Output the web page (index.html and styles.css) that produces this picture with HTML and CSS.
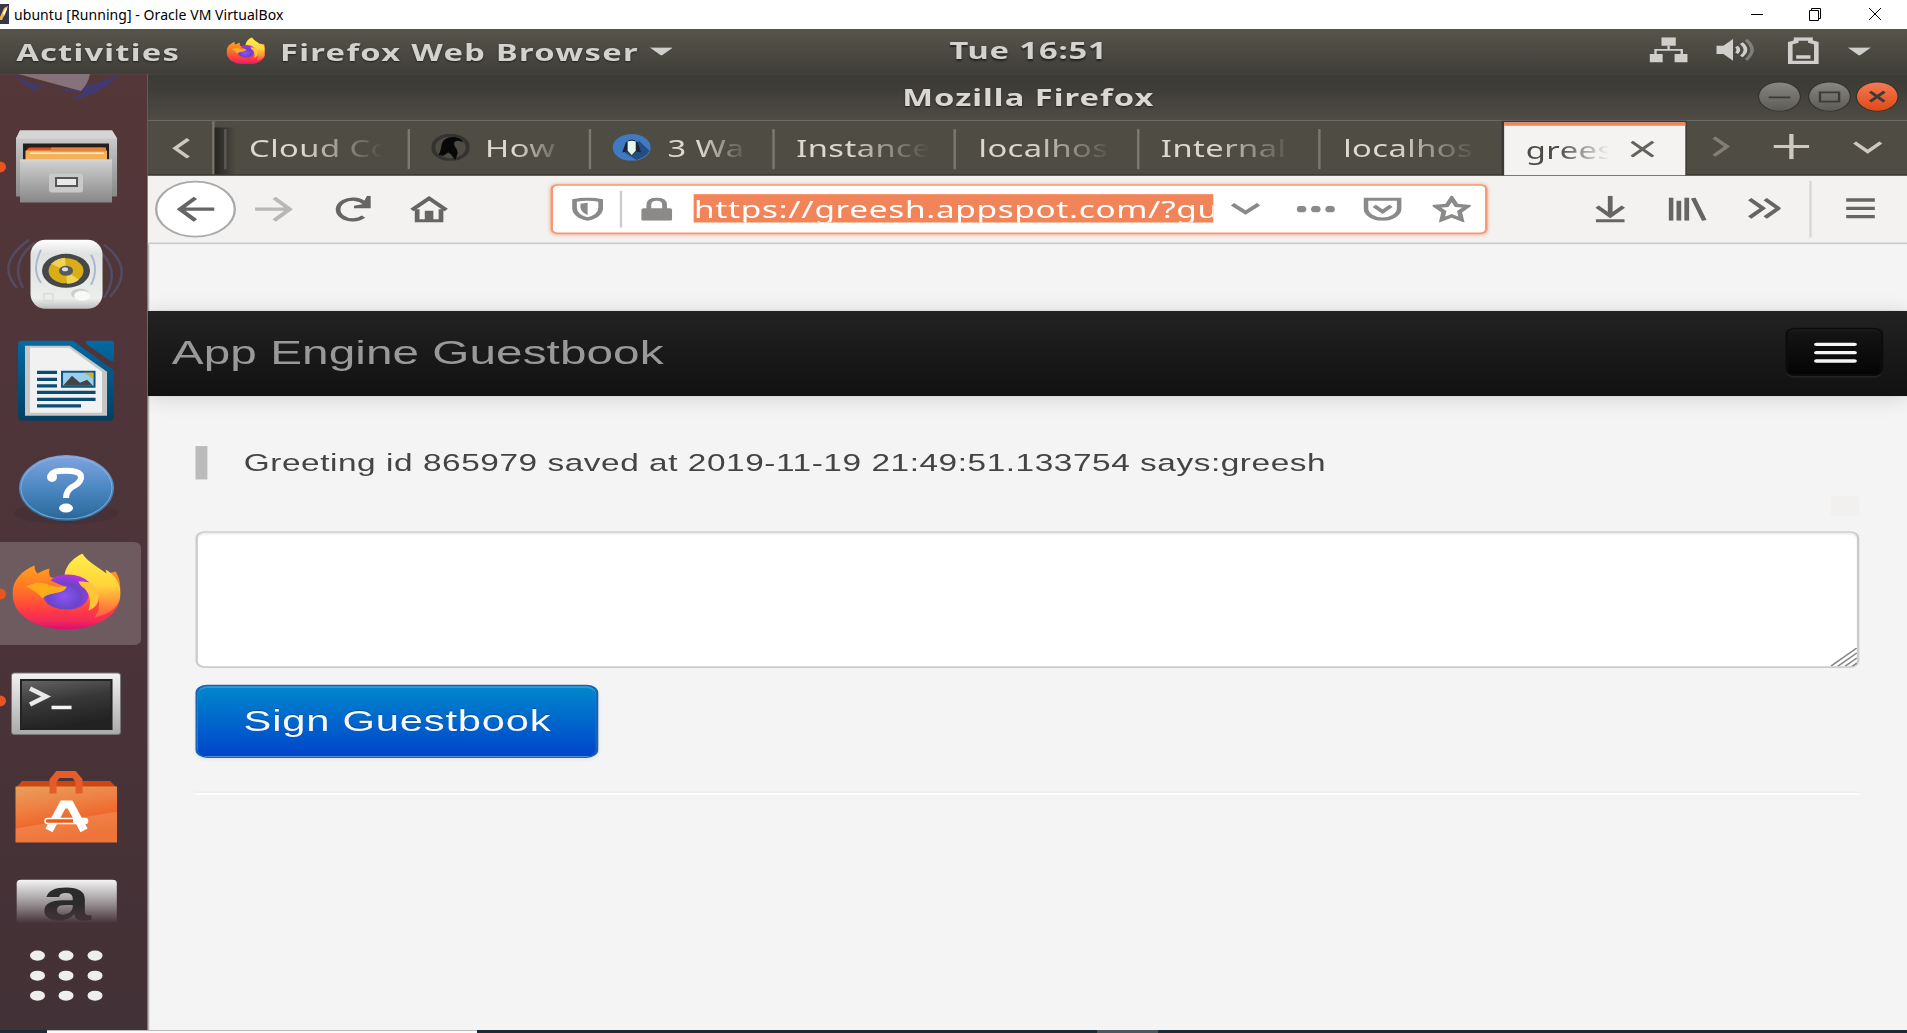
FILE: index.html
```html
<!DOCTYPE html>
<html lang="en">
<head>
<meta charset="utf-8">
<title>ubuntu [Running] - Oracle VM VirtualBox</title>
<link rel="stylesheet" href="styles.css">
</head>
<body>
<svg class="defs" width="0" height="0">
  <defs>
    <linearGradient id="ffBody" x1="0" y1="0" x2="0" y2="1"><stop offset="0" stop-color="#ffa01e"/><stop offset=".4" stop-color="#ff7028"/><stop offset=".72" stop-color="#ff3a45"/><stop offset=".88" stop-color="#f0285a"/><stop offset="1" stop-color="#dc0a72"/></linearGradient>
    <linearGradient id="ffTail" x1="0" y1="0" x2="0" y2="1"><stop offset="0" stop-color="#fff04a"/><stop offset=".5" stop-color="#ffd33a"/><stop offset="1" stop-color="#ff5a3c"/></linearGradient>
    <radialGradient id="ffGlobe" cx=".45" cy=".62" r=".6"><stop offset="0" stop-color="#8a55f5"/><stop offset=".6" stop-color="#6a45c8"/><stop offset="1" stop-color="#b034e0"/></radialGradient>
    <symbol id="firefox" viewBox="0 0 108 76" preserveAspectRatio="none">
      <path fill="url(#ffBody)" d="M0 40C0 26 10 17 22 12c0 4 1 6 3 8 4-2 7-4 12-5-1 5 0 8 2 9l30 4 34-10c5 7 5 15 5 22 0 22-24 36-54 36S0 62 0 40z"/>
      <path fill="url(#ffTail)" d="M52 21C54 10 62 4 70 0c3 7 15 13 24 20l-1-4c9 5 15 13 15 24 0 12-9 20-26 24 5-6 6-15 3-22L66 26z"/>
      <path fill="url(#ffGlobe)" d="M38 27q5-6 17-6 14 0 22 8-6-1-10 0 9 4 9 12c0 9-9 15-21 15S31 51 31 42c8-6 18-2 22-9-4-1-10-4-15-6z"/>
      <path fill="#ffac1c" d="M14 33c8-5 17-5 24-1 5 2 11 1 16 1 0 4-7 6-13 7-5 1-8 2-11 5-4-5-10-9-16-12z"/>
      <path fill="#ffc53a" d="M66 28c13-1 22 7 20 18-1 6-5 9-10 11 3-9 1-17-4-22-3-2-5-4-6-7z"/>
    </symbol>
  </defs>
</svg>

<div class="vm-window">
  <header class="vm-titlebar">
    <svg class="vm-logo" width="9" height="20" viewBox="0 0 9 20"><path fill="#353947" d="M0 0h9v20H0z"/><path fill="#f3b44a" d="M0 13 4 4l4-2-2 6-4 8H0z"/><path fill="#fff" d="m3 9 3-5 1 1-3 7z"/></svg>
    <span class="vm-title">ubuntu [Running] - Oracle VM VirtualBox</span>
    <div class="vm-controls">
      <svg width="14" height="14" viewBox="0 0 14 14"><path d="M1 7.500h12"/></svg>
      <svg width="14" height="14" viewBox="0 0 14 14"><path d="M.5 3.500h9v10h-9zM2.500 3.500v-2h9v10h-2"/></svg>
      <svg width="14" height="14" viewBox="0 0 14 14"><path d="m1 1 12 12M13 1 1 13"/></svg>
    </div>
  </header>

  <div class="viewport">
    <div class="screen">
      <div class="panel">
        <span class="activities">Activities</span>
        <svg class="panel-ff" width="16.500" height="16.500"><use href="#firefox" width="16.500" height="16.500"/></svg>
        <span class="app-name">Firefox Web Browser</span>
        <i class="triangle"></i>
        <span class="clock">Tue 16:51</span>
        <div class="indicators">
          <svg width="16" height="16" viewBox="0 0 16 16" fill="#d0cfcb"><path d="M5 0h6v5H5zM0 10h5.500v5H0zM10.500 10H16v5h-5.500z"/><path d="M2.500 10V7.500h11V10M8 5v3" fill="none" stroke="#d0cfcb"/></svg>
          <svg width="16" height="16" viewBox="0 0 16 16" fill="none" stroke="#d0cfcb" stroke-width="1.500"><path fill="#d0cfcb" stroke="none" d="M0 5h3l4-4v13l-4-4H0z"/><path d="M8.500 5.500q1.500 2 0 4M10.500 3.500q3.500 4 0 8"/><path d="M12.500 1.500q5 6 0 12" opacity=".4"/></svg>
          <svg width="13" height="16" viewBox="0 0 13 16" fill="none" stroke="#d0cfcb" stroke-width="2"><path d="M1 3.500 3.500 2.500V1h6v1.500l2.500 1V15H1z"/><path d="M3.500 11.800h6"/></svg>
          <i class="triangle"></i>
        </div>
      </div>

      <div class="desktop">
        <nav class="dock">
          <svg class="dock-part" height="23.100" viewBox="0 74 147 38.500" preserveAspectRatio="none"><path fill="#413a70" d="M14 74q42 30 106 0-20 22-50 26 10-4 15-9-25 3-49-8l2 9Q22 85 14 74z"/><path fill="#86727a" d="M18 74h72q-2 10-9 17z"/></svg>
          <svg class="dock-item" viewBox="0 113 147 108" preserveAspectRatio="none">
            <defs><linearGradient id="metal" x1="0" y1="0" x2="0" y2="1"><stop offset="0" stop-color="#d2d2d2"/><stop offset="1" stop-color="#888"/></linearGradient></defs>
            <ellipse cx="0" cy="167.500" rx="6" ry="5.500" fill="#e95420"/>
            <path fill="url(#metal)" d="M20 131h92l5 8v58H16v-58z"/><path fill="#d5d5d5" d="M20 131h92l5 8H16z"/>
            <path fill="#25201d" d="M23 144h86v17H23z"/><path fill="#dc5323" d="M29 148h74l2 4v9H25v-9z"/><path fill="#f2b15b" d="M26 151h81v10H26z"/><path fill="#e6843a" d="M51 148h55v4H51z"/><path fill="#fff0d0" d="M30 153h74v1.500H30z"/>
            <path fill="url(#metal)" d="M20 160h92v43H20z"/><path fill="#d4d4d4" d="M20 160h92v2H20z"/>
            <rect x="49" y="174" width="34" height="19" rx="3" fill="#c9c9c9"/><path fill="#e8e8e8" stroke="#555" stroke-width="2" d="M56 178.500h21v8H56z"/>
          </svg>
          <svg class="dock-item" viewBox="0 221 147 108" preserveAspectRatio="none">
            <defs><linearGradient id="speaker" x1="0" y1="0" x2="0" y2="1"><stop offset="0" stop-color="#fff"/><stop offset=".2" stop-color="#e0e2e0"/><stop offset=".85" stop-color="#eceeec"/><stop offset="1" stop-color="#bbb"/></linearGradient></defs>
            <g fill="none" stroke="#536089" stroke-width="2.500" opacity=".5"><path d="M29 240q-34 24-12 48M35 243q-26 19-12 45M104 245q32 24 6 52M98 250q24 20 6 48"/></g>
            <rect x="30.500" y="240" width="72" height="69" rx="15" fill="url(#speaker)"/>
            <ellipse cx="66" cy="271" rx="24" ry="17" fill="#44484a"/><ellipse cx="66" cy="271" rx="17.500" ry="12.500" fill="#d8ad18"/><path fill="#f1d354" d="m66 271-15-7q7-6 14-6zM66 271l13 9q-5 4-12 4z"/><ellipse cx="66" cy="271" rx="7" ry="5" fill="#555b5d"/><ellipse cx="65" cy="269.500" rx="3" ry="2" fill="#ddd"/>
            <path d="M41 250q-10 20 0 33M91 255q8 14 0 30" fill="none" stroke="#a9b9d2" stroke-width="2"/><ellipse cx="80" cy="294" rx="9" ry="5" fill="#ccc"/><ellipse cx="82" cy="296" rx="8" ry="5" fill="#f8f8f8"/><path d="M44 294h9v7h-9z" fill="none" stroke="#d2d5d2"/>
          </svg>
          <svg class="dock-item" viewBox="0 329.500 147 108" preserveAspectRatio="none">
            <defs><linearGradient id="writer" x1="0" y1="0" x2="0" y2="1"><stop offset="0" stop-color="#0369a3"/><stop offset="1" stop-color="#043f60"/></linearGradient></defs>
            <path fill="url(#writer)" d="M22 341h51l41 30v45q0 5-5 5H23q-5 0-5-5v-71q0-4 4-4zM86 341h25q3 0 3 3v17h-4L86 344z"/>
            <path fill="#c6c6c6" d="M25 346h45l37 26v44H25z"/><path fill="#f1f1f1" d="M30 348h39l33 24v41H30z"/>
            <path stroke="#0b4c73" stroke-width="3.300" d="M37 372.500h20M37 379.500h20M37 386h20M37 392.500h58.500M37 399.500h58.500M37 406h44"/>
            <path fill="#97cfee" stroke="#0b5583" stroke-width="2" d="M62 372h32.500v15H62z"/><path fill="#444" d="m63 386 9-10 8 7 7-3 6 6z"/><path fill="#ccb340" d="M84 373h9v6z"/>
          </svg>
          <svg class="dock-item" viewBox="0 437 147 108" preserveAspectRatio="none">
            <defs><linearGradient id="help" x1="0" y1="0" x2="0" y2="1"><stop offset="0" stop-color="#82a4df"/><stop offset=".5" stop-color="#4b88c2"/><stop offset="1" stop-color="#286596"/></linearGradient></defs>
            <ellipse cx="66" cy="514" rx="52" ry="11" fill="#3a272d" opacity=".3"/>
            <ellipse cx="66.500" cy="489" rx="47.500" ry="33" fill="url(#help)"/><ellipse cx="66.500" cy="489" rx="45.500" ry="31" fill="none" stroke="#94bbdf" opacity=".7"/>
            <path d="M51 479q-1-6 8-7 23-2 22 7-1 5-9 9-6 4-6 11" fill="none" stroke="#fff" stroke-width="6"/><circle cx="52" cy="478" r="5" fill="#fff"/><ellipse cx="66" cy="509" rx="7" ry="4.500" fill="#fff"/>
          </svg>
          <svg class="dock-item" viewBox="0 545.500 147 108" preserveAspectRatio="none">
            <path fill="#6d5b60" d="M0 543h133q8 0 8 6v91q0 6-8 6H0z"/><ellipse cx="0" cy="595" rx="6" ry="5.500" fill="#e95420"/>
            <use href="#firefox" x="12.500" y="554.500" width="108" height="76"/>
          </svg>
          <svg class="dock-item" viewBox="0 653.500 147 108" preserveAspectRatio="none">
            <defs><linearGradient id="frame" x1="0" y1="0" x2="0" y2="1"><stop offset="0" stop-color="#f2f2f2"/><stop offset="1" stop-color="#a9a9a9"/></linearGradient><linearGradient id="term" x1="0" y1="0" x2=".3" y2="1"><stop offset="0" stop-color="#666"/><stop offset=".5" stop-color="#383838"/><stop offset="1" stop-color="#222"/></linearGradient></defs>
            <ellipse cx="0" cy="701.500" rx="6" ry="5.500" fill="#e95420"/>
            <rect x="11.500" y="673.500" width="109" height="61.500" rx="3" fill="url(#frame)" stroke="#777"/><path fill="url(#term)" stroke="#222" stroke-width="2" d="M21 680.500h90.500v49H21z"/>
            <path fill="none" stroke="#e8e8e8" stroke-width="4.500" d="m30 689 16 8-16 8"/><path stroke="#f4f4f4" stroke-width="3.500" d="M51.500 708h20"/>
          </svg>
          <svg class="dock-item" viewBox="0 762 147 108" preserveAspectRatio="none">
            <defs><linearGradient id="bag" x1="0" y1="0" x2=".3" y2="1"><stop offset="0" stop-color="#e8a05a"/><stop offset=".4" stop-color="#ee8044"/><stop offset=".68" stop-color="#ee692b"/><stop offset=".7" stop-color="#f08047"/><stop offset="1" stop-color="#ee7439"/></linearGradient></defs>
            <path fill="#cc4714" d="m22 781.500h88l7 7H16z"/><path fill="url(#bag)" d="M15.500 787h101.500v56H15.500z"/>
            <path fill="none" stroke="#e35c2a" stroke-width="7" d="M53 794v-13l5-6h16l5 6v13"/>
            <path fill="none" stroke="#fff" stroke-width="8" d="m49 831 14-26h7l14 26"/><rect x="45" y="819" width="42.500" height="5" rx="2.500" fill="#ee5b13" stroke="#fff" stroke-width="1.500"/><path fill="#fff" d="M73 818.500h13l2 3-2 3H73z"/>
          </svg>
          <div class="dock-amazon"><b>a</b></div>
          <svg class="dock-part" height="63" viewBox="0 926 147 105" preserveAspectRatio="none" fill="#eeeeec"><ellipse cx="37.500" cy="956.700" rx="7.500" ry="5"/><ellipse cx="66" cy="956.700" rx="7.500" ry="5"/><ellipse cx="95" cy="956.700" rx="7.500" ry="5"/><ellipse cx="37.500" cy="976.700" rx="7.500" ry="5"/><ellipse cx="66" cy="976.700" rx="7.500" ry="5"/><ellipse cx="95" cy="976.700" rx="7.500" ry="5"/><ellipse cx="37.500" cy="996.700" rx="7.500" ry="5"/><ellipse cx="66" cy="996.700" rx="7.500" ry="5"/><ellipse cx="95" cy="996.700" rx="7.500" ry="5"/></svg>
        </nav>

        <main class="browser">
          <div class="browser-title"><span>Mozilla Firefox</span>
            <div class="window-buttons">
              <svg width="17" height="17" viewBox="0 0 17 17"><path d="M4 9h9"/></svg>
              <svg width="17" height="17" viewBox="0 0 17 17"><path d="M4.500 6h8v5.500h-8z"/></svg>
              <svg class="close" width="17" height="17" viewBox="0 0 17 17"><path d="m5.500 5.500 6 6M11.500 5.500l-6 6"/></svg>
            </div>
          </div>

          <div class="tabs">
            <div class="tab-scroll"><svg width="8" height="13" viewBox="0 0 8 13"><path d="M7 1 1.500 6.500 7 12"/></svg></div>
            <div class="tab first"><span class="label">Cloud Co</span></div>
            <div class="tab"><svg width="16" height="16" viewBox="0 0 16 16"><circle cx="8" cy="8" r="7.300" fill="none" stroke="#34332f"/><path fill="#080808" d="M3 12.500C3.500 11 4 9 4.200 7 4.500 3.500 6.500 1.800 9 1.800c2.500 0 4 1.500 4 3.200-1-1.500-3.500-1.500-3.500.5 0 2.500 1.500 3 1.500 6l-1 4-2-3.500L7 11l-2 2z"/></svg><span class="label">How</span></div>
            <div class="tab"><svg width="16" height="16" viewBox="0 0 16 16"><circle cx="8" cy="8" r="8" fill="#3f7ac2"/><path fill="#244d84" d="m11 4 4.500 6q-1.500 4-5.500 5.500L5 11z"/><path fill="#1c2630" d="M5.500 5q2.500-3.500 5 0l1.500 6-2-.5-2 2-2-2-2 .5z"/><path fill="#e7f5ef" d="M6.300 4.500q1.700-1 3.400 0V10L8 12.500 6.300 10z"/></svg><span class="label">3 Wa</span></div>
            <div class="tab"><span class="label">Instance</span></div>
            <div class="tab"><span class="label">localhos</span></div>
            <div class="tab"><span class="label">Internal</span></div>
            <div class="tab"><span class="label">localhos</span></div>
            <div class="tab active"><span class="label">grees</span><svg width="10" height="10" viewBox="0 0 10 10"><path d="m.5.500 9 9M9.500.500l-9 9"/></svg></div>
            <div class="tab-tools">
              <svg class="dim" width="8" height="13" viewBox="0 0 8 13"><path d="m1 1 5.500 5.500L1 12"/></svg>
              <svg width="15" height="15" viewBox="0 0 15 15"><path d="M7.500 0v15M0 7.500h15"/></svg>
              <svg width="13" height="8" viewBox="0 0 13 8"><path d="m1 1 5.500 5.500L12 1"/></svg>
            </div>
          </div>

          <div class="toolbar">
            <div class="back"><svg width="16" height="16" viewBox="0 0 16 16"><path d="M16 8H2M8 1.200 1.500 8 8 14.800"/></svg></div>
            <svg class="forward" width="16" height="16" viewBox="0 0 16 16"><path d="M0 8h14M8 1.200 14.500 8 8 14.800"/></svg>
            <svg class="reload" width="16" height="16" viewBox="0 0 16 16"><path d="M12.500 12.500A6.200 6.200 0 1 1 13 4.500"/><path class="fill" d="M15.500 0v7.500h-7V6L12 5l2-5z"/></svg>
            <svg class="home" width="16" height="16" viewBox="0 0 16 16"><path d="m.8 8.500 7.200-7 7.200 7M3 8v7h10V8"/><path class="fill" d="M6.200 9h3.600v6H6.200z"/></svg>
            <div class="urlbar">
              <svg class="shield" width="13" height="14" viewBox="0 0 13 14"><path d="M1 1.800Q4 1 6.500 1T12 1.800V6q0 5-5.500 7Q1 11 1 6z"/><path class="fill" d="M6.500 3.200v7.300Q3.800 9 3.500 6V3.800z"/></svg>
              <i class="url-sep"></i>
              <svg class="lock" width="13" height="14" viewBox="0 0 13 14"><path d="M3.200 7V4.500Q3.200 1 6.500 1t3.300 3.500V7"/><rect class="fill" y="6.500" width="13" height="7.500" rx="1"/></svg>
              <div class="address"><span>https://greesh.appspot.com/?gu</span></div>
              <svg class="drop" width="13" height="8" viewBox="0 0 13 8"><path d="m1 1 5.500 5L12 1"/></svg>
              <svg class="dots" width="16" height="4" viewBox="0 0 16 4"><circle class="fill" cx="2" cy="2" r="2"/><circle class="fill" cx="8" cy="2" r="2"/><circle class="fill" cx="14" cy="2" r="2"/></svg>
              <svg class="pocket" width="16" height="14" viewBox="0 0 16 14"><path d="M1 1h14v5.500a7 6.500 0 0 1-14 0zM4.500 5 8 8.500 11.500 5"/></svg>
              <svg class="star" width="16" height="16" viewBox="0 0 16 16"><path d="m8 1.500 2 4.200 4.600.6-3.300 3.200.8 4.800L8 12l-4.100 2.300.8-4.800-3.300-3.200L6 5.700z"/></svg>
            </div>
            <svg class="download" width="13" height="16" viewBox="0 0 13 16"><path d="M6.500 0v11.500M1 6.500 6.500 12 12 6.500M.5 15h12"/></svg>
            <svg class="library" width="16" height="14" viewBox="0 0 16 14"><path d="M1 0v14M4.300 2v12M7.600 0v14M10.300.300 15 13.800"/></svg>
            <svg class="more" width="14" height="13" viewBox="0 0 14 13"><path d="m1 1 5.500 5.500L1 12M7.500 1 13 6.500 7.500 12"/></svg>
            <i class="tool-sep"></i>
            <svg class="menu" width="13" height="13" viewBox="0 0 13 13"><path d="M.5 1.500h12M.5 6.500h12M.5 11.500h12"/></svg>
          </div>

          <div class="page">
            <div class="navbar"><span>App Engine Guestbook</span><button class="toggle" aria-label="Menu"><i></i><i></i><i></i></button></div>
            <div class="container">
              <blockquote>Greeting id 865979 saved at 2019-11-19 21:49:51.133754 says:greesh</blockquote>
              <div class="ghost"></div>
              <div class="message"><svg width="11" height="11" viewBox="0 0 11 11"><path d="M0 11 11 0M3 11l8-8M6 11l5-5M9 11l2-2"/></svg></div>
              <button class="sign">Sign Guestbook</button>
              <hr>
            </div>
          </div>
        </main>
      </div>
    </div>
  </div>
  <footer class="taskbar"><i class="t-light"></i><i class="t-gap"></i><i class="t-mid"></i></footer>
</div>
</body>
</html>
```
FILE: styles.css
```css
* { box-sizing: border-box; }
html, body { height: 1033px; overflow: hidden; }
body { margin: 0; background: #fff; font-family: "Noto Sans", sans-serif; }
svg { display: block; flex: none; }
i { display: block; flex: none; }
.defs { position: absolute; }

.vm-window { width: 1907px; height: 1033px; display: flex; flex-direction: column; }
.vm-titlebar { height: 29px; flex: none; display: flex; align-items: center; background: #fff; }
.vm-logo { margin-top: -1px; }
.vm-title { margin-left: 5px; font-size: 14px; line-height: 20px; color: #000; white-space: nowrap; letter-spacing: .06px; }
.vm-controls { margin-left: auto; margin-right: 25px; margin-top: -1px; display: flex; gap: 45px; }
.vm-controls svg { fill: none; stroke: #000; stroke-width: 1; }

/* The guest display is 800x600, stretched to the window in scaled mode */
.viewport { height: 1001px; flex: none; overflow: hidden; }
.screen { width: 800px; height: 600px; transform: scale(2.38375, 1.66833); transform-origin: 0 0; display: flex; flex-direction: column; background: #f4f4f4; }

.panel { position: relative; height: 27px; flex: none; display: flex; align-items: center; padding-left: 6.800px; background: linear-gradient(#57544a, #3f3e39); color: #d4d2cd; font-size: 13.700px; font-weight: 700; line-height: 18px; text-shadow: 0 1px 1px #222; white-space: nowrap; }
.activities { width: 88.200px; letter-spacing: .52px; }
.panel-ff { margin-right: 6px; margin-top: -1px; }
.app-name { width: 155px; letter-spacing: .55px; }
.triangle { width: 10px; height: 5px; background: #d0cfcb; clip-path: polygon(0 0, 100% 0, 50% 100%); }
.clock { position: absolute; left: 398.300px; top: 4px; letter-spacing: .37px; }
.indicators { margin-left: auto; margin-right: 15px; display: flex; align-items: center; }
.indicators svg { margin-top: -1px; }
.indicators svg:nth-child(1) { margin-right: 12px; }
.indicators svg:nth-child(2) { margin-right: 14px; }
.indicators svg:nth-child(3) { margin-right: 12px; }

.desktop { height: 573px; flex: none; display: flex; }
.dock { width: 61.700px; flex: none; display: flex; flex-direction: column; background: linear-gradient(#543738, #4c343a 50%, #423136); }
.dock-part, .dock-item { width: 61.700px; }
.dock-item { height: 64.740px; overflow: visible; }
.dock-amazon { flex: none; margin: 6.300px 0 1.500px 6.600px; width: 42.500px; height: 26px; border-radius: 2px 2px 0 0; background: linear-gradient(#f4f4f4, #989092 55%, transparent); overflow: hidden; text-align: center; }
.dock-amazon b { display: block; margin-top: -9.500px; font: 700 37px/44px "Liberation Sans", sans-serif; color: transparent; background: linear-gradient(#2b2b2b 55%, #3b3134 70%, #423136 80%); background-clip: text; -webkit-background-clip: text; }

.browser { flex: 1; min-width: 0; display: flex; flex-direction: column; color: #dcd8d0; }
.browser-title { position: relative; height: 27.700px; flex: none; background: linear-gradient(#3b3a35, #3e3d38 30%, #4f4c44); font-size: 13.700px; font-weight: 700; line-height: 18px; text-shadow: 0 1px 1px #222; }
.browser-title span { position: absolute; left: 316.800px; top: 4.500px; white-space: nowrap; letter-spacing: .44px; }
.window-buttons { display: flex; justify-content: flex-end; gap: 3.200px; padding: 5.400px 4.300px 0 0; }
.window-buttons svg { border-radius: 50%; background: linear-gradient(#888780, #5c5b54); box-shadow: 0 0 0 .5px #32312d; fill: none; stroke: #3c3b37; }
.window-buttons .close { background: linear-gradient(#f37a54, #df4a16); stroke-width: 1.500; }

.tabs { height: 33px; flex: none; display: flex; background: #4f4c44; border-bottom: 1px solid #3a3934; }
.tab-scroll { width: 28.800px; flex: none; padding: 10px 0 0 10px; border-right: 1px solid #77746c; }
.tabs svg { fill: none; stroke: #cec9c0; stroke-width: 1.800; }
.tab { position: relative; width: 76.500px; flex: none; display: flex; align-items: center; padding: 1px 10px 0; gap: 6.500px; }
.tab > svg { stroke: none; }
.tab::before { content: ""; position: absolute; left: 0; top: 5px; width: 1px; height: 24px; background: #7c7971; }
.tab.first { margin-left: 4px; }
.tab.first::after { content: ""; position: absolute; left: -4px; top: 4px; bottom: 0; width: 9px; background: linear-gradient(90deg, #0008, #0000); }
.label { flex: 1; min-width: 0; overflow: hidden; white-space: nowrap; font-size: 13.700px; line-height: 19px; letter-spacing: .2px; -webkit-mask-image: linear-gradient(90deg, #000 40%, transparent); mask-image: linear-gradient(90deg, #000 40%, transparent); }
.tab.active { height: 32px; margin: 1px -.2px 0 .6px; width: 76px; background: #f4f3f2; border-top: 2px solid #f38458; color: #4c4b48; padding: 0 12.300px 1px 9.500px; gap: 9px; box-shadow: 0 0 0 1px #393834; clip-path: inset(-1px -1px 0 -1px); }
.tab.active::before { display: none; }
.tab.active svg { stroke: #65635f; stroke-width: 1.600; }
.tab-tools { flex: 1; display: flex; align-items: center; justify-content: flex-end; gap: 18.200px; padding: 0 9.600px 0 0; }
.tab-tools .dim { opacity: .4; }

.toolbar { height: 41px; flex: none; display: flex; align-items: center; background: #f3f2f1; border-bottom: 1px solid #c9c8c6; padding-left: 3.500px; }
.toolbar svg { fill: none; stroke: #666563; stroke-width: 2; }
.toolbar .fill { fill: #666563; stroke: none; }
.back { width: 34.200px; height: 34.200px; flex: none; border: 1px solid #aaa; border-radius: 50%; background: #fff; display: grid; place-items: center; }
.toolbar .forward { margin-left: 8px; stroke: #b9b8b6; }
.reload { margin-left: 16.500px; }
.home { margin-left: 15.700px; }
.urlbar { margin-left: 43.300px; width: 393px; height: 30px; flex: none; display: flex; align-items: center; border: 1px solid #f39a75; border-radius: 3px; background: #fff; padding-left: 7.800px; box-shadow: 0 0 2px #f3b49c; }
.toolbar .urlbar svg { stroke: #8b8a89; }
.toolbar .urlbar .fill { fill: #8b8a89; stroke: none; }
.url-sep { width: 1px; height: 22px; background: #ccc; margin: 0 8px 0 7.500px; }
.address { width: 217.800px; height: 17.500px; margin-left: 9px; flex: none; overflow: hidden; white-space: nowrap; background: #f28459; color: #fff; font-size: 14px; line-height: 18px; letter-spacing: .28px; }
.drop { margin-left: 7.200px; }
.dots { margin-left: 14.800px; }
.pocket { margin-left: 12.500px; }
.star { margin-left: 12.300px; }
.download { margin-left: 45px; }
.library { margin-left: 18.200px; }
.more { margin-left: 17px; }
.tool-sep { width: 1px; height: 34px; background: #d9d8d6; margin: 0 14.600px 0 11.800px; }

.page { flex: 1; background: #f4f4f4; padding-top: 40.200px; box-shadow: inset .6px 0 #b5b2b2; font-family: "Liberation Sans", Arial, sans-serif; }
.navbar { height: 51px; display: flex; align-items: center; justify-content: space-between; padding: 0 10.200px 0 10.400px; background: linear-gradient(#222, #111); box-shadow: 0 1px 10px rgba(0,0,0,.14); clip-path: inset(-12px 0 -14px 0); color: #999; font-size: 20px; line-height: 24px; letter-spacing: .03px; }
.toggle { width: 40.500px; height: 29px; margin-top: -1px; padding: 0; display: flex; flex-direction: column; align-items: center; justify-content: center; gap: 3px; border: 1px solid #0c0c0c; border-radius: 4px; background: linear-gradient(#151515, #040404); box-shadow: inset 0 1px 0 #1c1c1c, 0 1px 0 #222; }
.toggle i { width: 18px; height: 2px; border-radius: 1px; background: #f5f5f5; }
.container { padding: 29.800px 20px 0 20.400px; }
blockquote { margin: 0; height: 20px; padding-left: 15.200px; border-left: 5px solid #bbb; color: #444; font-size: 14px; line-height: 20px; letter-spacing: .232px; white-space: nowrap; }
.ghost { width: 12.500px; height: 12.500px; margin: 10px 0 9px auto; background: #f1f0ef; }
.message { height: 82px; display: flex; align-items: flex-end; justify-content: flex-end; padding: 0 .5px .5px 0; border: 1px solid #ccc; border-radius: 4px; background: #fff; box-shadow: inset 0 1px 1px rgba(0,0,0,.08); }
.message svg { fill: none; stroke: #888; stroke-width: .8; }
.sign { display: block; width: 169.400px; height: 44px; margin-top: 10px; padding: 0; border: 1px solid #1764b4; border-radius: 5px; background: linear-gradient(#08c, #04c); box-shadow: inset 0 1px 0 #309bd3, 0 1px 2px rgba(0,0,0,.05); color: #f6f8fc; font: 17.500px/20px "Liberation Sans", Arial, sans-serif; letter-spacing: .33px; text-shadow: 0 -1px 0 rgba(0,0,0,.25); }
hr { margin: 20px 0; border: 0; border-top: 1px solid #eee; border-bottom: 1px solid #fff; }

.taskbar { height: 3px; flex: none; display: flex; background: #1d2b35; }
.t-light { width: 430px; margin-left: 47px; background: #fafafa; border-top: 1px solid #bbb; }
.t-gap { width: 620px; }
.t-mid { width: 61px; background: #4c585c; }
```
